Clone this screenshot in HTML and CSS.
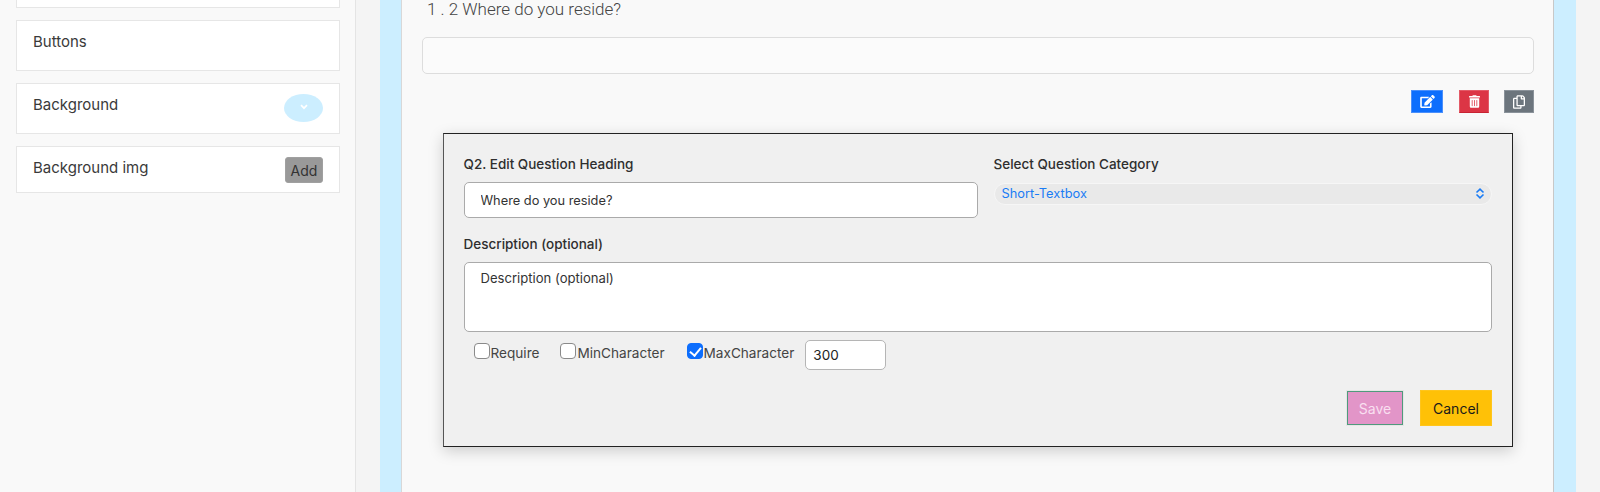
FILE: index.html
```html
<!DOCTYPE html>
<html lang="en">
<head>
<meta charset="utf-8">
<title>Survey editor</title>
<link rel="stylesheet" href="styles.css">
</head>
<body>
<div class="page">
  <aside class="sidebar">
    <div class="tool tool-cut"></div>
    <div class="tool tool-tall"><span>Buttons</span></div>
    <div class="tool tool-tall">
      <span>Background</span>
      <button class="pill" type="button" aria-label="Expand">
        <svg width="10" height="6" viewBox="0 0 10 6"><path d="M2 1.2 5 4.2 8 1.2" fill="none" stroke="#fff" stroke-width="1.7"/></svg>
      </button>
    </div>
    <div class="tool tool-short">
      <span>Background img</span>
      <button class="add" type="button">Add</button>
    </div>
  </aside>
  <main class="main">
    <div class="canvas">
      <section class="card">
        <h2 class="q-title">1 . 2 Where do you reside?</h2>
        <div class="q-input"></div>
        <div class="actions">
          <button class="act act-edit" type="button" aria-label="Edit">
            <svg width="15" height="13" viewBox="0 0 576 512"><path fill="#fff" d="M402.6 83.2l90.2 90.2c3.8 3.8 3.8 10 0 13.8L274.4 405.6l-92.8 10.3c-12.4 1.4-22.9-9.1-21.5-21.5l10.3-92.8L388.8 83.2c3.8-3.8 10-3.8 13.8 0zm162-22.9l-48.8-48.8c-15.2-15.2-39.9-15.2-55.2 0l-35.4 35.4c-3.8 3.8-3.8 10 0 13.8l90.2 90.2c3.8 3.8 10 3.8 13.8 0l35.4-35.4c15.2-15.3 15.2-40 0-55.2zM384 346.2V448H64V128h229.8c3.2 0 6.2-1.3 8.5-3.5l40-40c7.6-7.6 2.2-20.5-8.5-20.5H48C21.5 64 0 85.5 0 112v352c0 26.5 21.5 48 48 48h352c26.5 0 48-21.5 48-48V306.2c0-10.7-12.900-16-20.500-8.500l-40 40c-2.200 2.300-3.500 5.300-3.500 8.500z"/></svg>
          </button>
          <button class="act act-del" type="button" aria-label="Delete">
            <svg width="11" height="13" viewBox="0 0 448 512"><path fill="#fff" d="M32 464a48 48 0 0 0 48 48h288a48 48 0 0 0 48-48V128H32zm272-256a16 16 0 0 1 32 0v224a16 16 0 0 1-32 0zm-96 0a16 16 0 0 1 32 0v224a16 16 0 0 1-32 0zm-96 0a16 16 0 0 1 32 0v224a16 16 0 0 1-32 0zM432 32H312l-9.400-18.700A24 24 0 0 0 281.100 0H166.800a23.700 23.700 0 0 0-21.400 13.300L136 32H16A16 16 0 0 0 0 48v32a16 16 0 0 0 16 16h416a16 16 0 0 0 16-16V48a16 16 0 0 0-16-16z"/></svg>
          </button>
          <button class="act act-copy" type="button" aria-label="Duplicate">
            <svg width="12" height="14" viewBox="0 0 448 512"><path fill="#fff" d="M433.900 65.900l-51.900-51.900A48 48 0 0 0 348.100 0H176c-26.500 0-48 21.500-48 48v48H48c-26.500 0-48 21.500-48 48v320c0 26.500 21.500 48 48 48h224c26.500 0 48-21.500 48-48v-48h80c26.500 0 48-21.500 48-48V99.900a48 48 0 0 0-14.100-34zM266 464H54a6 6 0 0 1-6-6V150a6 6 0 0 1 6-6h74v224c0 26.500 21.500 48 48 48h96v42a6 6 0 0 1-6 6zm128-96H182a6 6 0 0 1-6-6V54a6 6 0 0 1 6-6h106v88c0 13.300 10.700 24 24 24h88v202a6 6 0 0 1-6 6zm6-256h-64V48h9.600c1.600 0 3.100.6 4.200 1.800l48.400 48.400a6 6 0 0 1 1.800 4.200V112z"/></svg>
          </button>
        </div>
        <form class="editor">
          <div class="row-two">
            <div class="field">
              <label class="lbl">Q2. Edit Question Heading</label>
              <input class="text-in" type="text" value="Where do you reside?">
            </div>
            <div class="field">
              <label class="lbl">Select Question Category</label>
              <div class="select-wrap">
                <select class="sel"><option>Short-Textbox</option></select>
                <svg class="sel-arrows" width="10" height="11" viewBox="0 0 10 11"><path d="M1.500 4.500 5 1.200 8.500 4.500M1.500 6.500 5 9.800 8.500 6.500" fill="none" stroke="#1a7cf5" stroke-width="1.600"/></svg>
              </div>
            </div>
          </div>
          <label class="lbl lbl-desc">Description (optional)</label>
          <textarea class="area">Description (optional)</textarea>
          <div class="checks">
            <label class="chk"><input type="checkbox">Require</label>
            <label class="chk"><input type="checkbox">MinCharacter</label>
            <label class="chk"><input type="checkbox" checked>MaxCharacter</label>
            <input class="num" type="text" value="300">
          </div>
          <div class="foot">
            <button class="btn btn-save" type="button">Save</button>
            <button class="btn btn-cancel" type="button">Cancel</button>
          </div>
        </form>
      </section>
    </div>
  </main>
</div>
</body>
</html>
```
FILE: styles.css
```css
* { box-sizing: border-box; }
html, body { margin: 0; height: 492px; overflow: hidden; }
body { font-family: Inter, "Liberation Sans", sans-serif; color: #333; }
.page { display: grid; grid-template-columns: 356px 1fr; height: 492px; }

.sidebar {
  background: #f9f9f9;
  border-right: 1px solid #e4e4e4;
  padding: 0 15px 0 16px;
  display: flex;
  flex-direction: column;
  gap: 12.500px;
}
.tool {
  background: #fff;
  border: 1px solid #e6e6e6;
  display: flex;
  justify-content: space-between;
  padding: 0 16px;
  font-size: 15px;
  color: #3a3a3a;
}
.tool-cut { height: 7.500px; border-top: 0; }
.tool-tall { height: 50.500px; padding-top: 11px; line-height: 20px; }
.tool-short { height: 47px; padding-top: 11px; line-height: 20px; }
.pill {
  width: 39px; height: 28px; margin-top: -1px;
  border: 0; border-radius: 50%;
  background: #cceeff;
  display: flex; align-items: center; justify-content: center;
  padding: 0 0 3px;
}
.add {
  width: 38px; height: 26px; margin-top: -1px;
  border: 1px solid #a0a0a0; border-radius: 3px;
  background: #999;
  color: #333;
  font: 14px Inter, sans-serif;
  padding: 0;
}

.main { background: #f4f4f4; padding: 0 24px; }
.canvas { background: #cceeff; padding: 0 22px 0 21px; height: 492px; }
.card {
  background: #f9f9f9;
  height: 492px;
  border-left: 1px solid #d8d8d8;
  border-right: 1px solid #c8c8c8;
  padding: 0 19px 0 20px;
}
.q-title {
  margin: 0 0 0 5px;
  height: 37px;
  font: 300 17px/19px Roboto, sans-serif;
  color: #444;
}
.q-input {
  height: 36.500px;
  background: #fbfbfb;
  border: 1px solid #ddd;
  border-radius: 5px;
}
.actions {
  display: flex; justify-content: flex-end; gap: 15px;
  margin-top: 16.500px;
  height: 23px;
}
.act {
  border: 1px solid;
  height: 23px; width: 30px; padding: 0;
  display: flex; align-items: center; justify-content: center;
}
.act-edit { width: 32px; background: #0d6efd; border-color: #4a8ffb; margin-right: 1px; }
.act-del { background: #dc3545; border-color: #e35a67; border-bottom-color: #c82333; }
.act-copy { background: #6c757d; border-color: #8a929a; }

.editor {
  width: 1070.500px;
  height: 314px;
  margin: 20px 0 0 20.500px;
  background: #f0f0f0;
  border: 1px solid #222;
  border-left-color: #555;
  box-shadow: 0 4px 14px rgba(0, 0, 0, .18);
  padding: 22px 20px 0;
}
.row-two { display: grid; grid-template-columns: 514px 498.500px; gap: 16px; }
.lbl {
  display: block;
  font-size: 13.500px; font-weight: 500; line-height: 16px;
  color: #2e2e2e;
}
.field .lbl { margin-bottom: 10px; }
.text-in {
  display: block;
  width: 100%; height: 36px;
  border: 1px solid #aaa; border-radius: 5px;
  background: #fff;
  padding: 0 16px;
  font: 12.800px Inter, sans-serif; color: #333;
}
.select-wrap { position: relative; height: 22px; }
.sel {
  appearance: none;
  width: 100%; height: 22px;
  border: 1px solid #f6f6f6; border-radius: 11px;
  background: #e9e9e9;
  padding: 0 7px;
  font: 12.800px Inter, sans-serif; color: #1a7cf5;
}
.sel-arrows { position: absolute; right: 7px; top: 5.500px; }
.lbl-desc { margin-top: 18px; }
.area {
  display: block;
  width: 100%; height: 70px;
  margin-top: 10px;
  border: 1px solid #aaa; border-radius: 5px;
  background: #fff;
  padding: 7px 16px;
  font: 13.100px Inter, sans-serif; color: #333;
  resize: none;
}
.checks {
  display: flex; align-items: center;
  height: 30px;
  margin-top: 8px;
  padding-left: 10px;
}
.chk {
  display: flex; align-items: center;
  font-size: 13.600px; color: #444;
  margin-right: 21px;
  margin-top: -4px;
}
.chk input {
  appearance: none;
  width: 16px; height: 16px;
  margin: -4px 1px 0 0;
  border: 1px solid #8a8a8a; border-radius: 4px;
  background: #fff;
  position: relative;
}
.chk input:checked { background: #0d6efd; border-color: #0d6efd; }
.chk input:checked::before {
  content: "";
  position: absolute; left: 4.500px; top: 1px;
  width: 5px; height: 9px;
  border: solid #fff; border-width: 0 2px 2px 0;
  transform: rotate(40deg);
}
.chk:nth-child(2) { margin-right: 22px; }
.chk:nth-child(3) { margin-right: 11px; }
.num {
  width: 81px; height: 30px;
  border: 1px solid #b5b5b5; border-radius: 5px;
  background: #fff;
  padding: 0 7px;
  font: 13.500px Inter, sans-serif; color: #222;
}
.foot {
  display: flex; justify-content: flex-end; gap: 16px;
  margin-top: 20px;
}
.btn { height: 36px; font: 14px Inter, sans-serif; padding: 0; }
.btn-save {
  width: 58px;
  background: #e295c8;
  border: 2px solid #e6e6e6;
  outline: 1px solid #4f9a7c; outline-offset: -2px;
  color: #f9dff0;
}
.btn-cancel {
  width: 72px;
  background: #ffc107;
  border: 1px solid #ffc51c;
  color: #1a1a1a;
}
```
